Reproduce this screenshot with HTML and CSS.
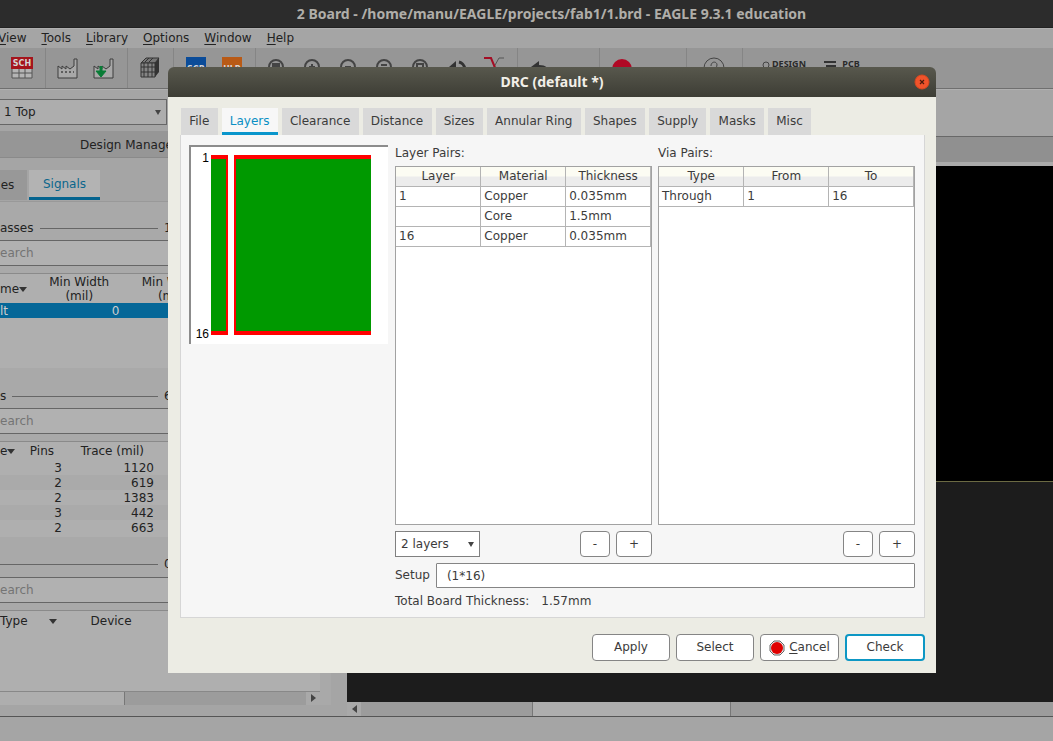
FILE: index.html
```
<!DOCTYPE html>
<html lang="en">
<head>
<meta charset="utf-8">
<title>DRC (default *)</title>
<link rel="stylesheet" href="styles.css">
</head>
<body>
<div class="app">
  <header class="titlebar">2 Board - /home/manu/EAGLE/projects/fab1/1.brd - EAGLE 9.3.1 education</header>
  <nav class="menu">
    <a href="#"><u>V</u>iew</a><a href="#"><u>T</u>ools</a><a href="#"><u>L</u>ibrary</a><a href="#"><u>O</u>ptions</a><a href="#"><u>W</u>indow</a><a href="#"><u>H</u>elp</a>
  </nav>
  <div class="toolbar">
    <button class="tool" aria-label="Schematic"><svg viewBox="0 0 22 22"><path d="M1 1h20v20H1z" fill="#b5b5b5" stroke="#555"/><path d="M1 16h20M8 12v9M14 12v9" stroke="#555"/><path d="M0 0h22v12H0z" fill="#a5141c"/><text x="11" y="9" class="icon-text">SCH</text></svg></button>
    <i class="sep"></i>
    <button class="tool" aria-label="Manufacturing"><svg viewBox="0 0 22 22"><path d="M1 21V9l4 3V9l4 3V9l4 3 4-3V2h3v19z" fill="#a8a8a8" stroke="#3c3c3c"/><path d="M4 15h13" stroke="#444" stroke-width="1.5" stroke-dasharray="2 2"/></svg></button>
    <button class="tool" aria-label="Manufacturing sync"><svg viewBox="0 0 22 22"><path d="M1 21V9l4 3V9l4 3V9l4 3 4-3V2h3v19z" fill="#a8a8a8" stroke="#3c3c3c"/><path d="M8 9v5" stroke="#087c36" stroke-width="3"/><path d="M3 14h10l-5 6z" fill="#087c36" stroke="#087c36" stroke-linejoin="round"/></svg></button>
    <i class="sep"></i>
    <button class="tool" aria-label="Package"><svg viewBox="0 0 22 22"><path d="M2 6l5-5h13l-4 5z" fill="#777" stroke="#333"/><path d="M2 6h14v14H2z" fill="#858585" stroke="#333"/><path d="M16 6l4-5v14l-4 5z" fill="#333"/><path d="M5 6v14M9 6v14M13 6v14M2 10h14M2 15h14M6 5l4-4M10 5l4-4" stroke="#333"/></svg></button>
    <i class="sep"></i>
    <button class="tool" aria-label="Script"><svg viewBox="0 0 22 22"><path d="M1 0h20v20H1z" fill="#0b4c99"/><text x="11" y="15" class="icon-text">SCR</text></svg></button>
    <button class="tool" aria-label="User program"><svg viewBox="0 0 22 22"><path d="M1 0h20v20H1z" fill="#b95a16"/><text x="11" y="15" class="icon-text">ULP</text></svg></button>
    <i class="sep"></i>
    <button class="tool" aria-label="Zoom to fit"><svg viewBox="0 0 22 22" class="line"><circle cx="9" cy="10" r="7"/><path d="M6 7h6v6H6z" fill="#444"/></svg></button>
    <button class="tool" aria-label="Zoom in"><svg viewBox="0 0 22 22" class="line"><circle cx="9" cy="10" r="7"/><path d="M9 7v6M6 10h6"/></svg></button>
    <button class="tool" aria-label="Zoom out"><svg viewBox="0 0 22 22" class="line"><circle cx="9" cy="10" r="7"/><path d="M6 10h6"/></svg></button>
    <button class="tool" aria-label="Zoom select"><svg viewBox="0 0 22 22" class="line"><circle cx="9" cy="10" r="7"/><path d="M6 8h6"/></svg></button>
    <button class="tool" aria-label="Redraw"><svg viewBox="0 0 22 22" class="line"><circle cx="9" cy="10" r="7"/><path d="M6 12V7h6v5"/></svg></button>
    <button class="tool" aria-label="Refresh"><svg viewBox="0 0 22 22"><path d="M2 10l7-6v6z" fill="#333"/><path d="M12 5c4 1 5 3 6 7" fill="none" stroke="#333" stroke-width="3"/></svg></button>
    <button class="tool" aria-label="Route"><svg viewBox="0 0 22 22" fill="none"><path d="M21 1h-5l-5 9v11" stroke="#555"/><path d="M1 1h7l5 12" stroke="#a30d24" stroke-width="2"/></svg></button>
    <i class="sep"></i>
    <button class="tool" aria-label="Undo"><svg viewBox="0 0 22 22"><path d="M2 10l8-6v4c7 0 10 3 10 9-3-3-5-4-10-4v4z" fill="#333"/></svg></button>
    <button class="tool" aria-label="Redo"><svg viewBox="0 0 22 22"><path d="M20 16l-7-5v10z" fill="#777"/></svg></button>
    <i class="sep"></i>
    <button class="tool" aria-label="Stop"><svg viewBox="0 0 22 22"><circle cx="11" cy="12" r="10" fill="#b10925"/></svg></button>
    <button class="tool" aria-label="Go"><svg viewBox="0 0 22 22"><circle cx="11" cy="16" r="5" fill="#8a8a8a"/></svg></button>
    <i class="sep wide"></i>
    <button class="tool" aria-label="Help"><svg viewBox="0 0 22 22" class="line thin"><circle cx="11" cy="11" r="10"/><path d="M8 9c0-5 6-5 6-1 0 3-3 3-3 6"/></svg></button>
    <i class="sep wide"></i>
    <button class="tool brand"><svg viewBox="0 0 8 8" class="line thin mark"><circle cx="4" cy="5" r="3"/></svg>DESIGN</button>
    <button class="tool brand"><svg viewBox="0 0 12 8" class="mark pcb"><path d="M0 2h12M2 6h10" stroke="#333" stroke-width="2"/></svg>PCB</button>
  </div>
  <div class="layerbar"><span class="pick"><select aria-label="Layer"><option>1 Top</option></select></span></div>
  <main class="work">
    <aside class="dock">
      <h2 class="dock-title">Design Manager</h2>
      <div class="dock-tabs"><button class="dtab first">es</button><button class="dtab on">Signals</button></div>
      <div class="sections">
        <section class="section">
          <div class="legend"><span>asses</span><hr><span class="count">1</span></div>
          <input class="search" placeholder="earch" aria-label="Search classes">
          <div class="list">
            <table class="classes">
              <tr><th class="n">me<b class="down"></b></th><th>Min Width<br>(mil)</th><th>Min Width<br>(mil)</th></tr>
              <tr class="sel"><td class="l">lt</td><td>0</td><td>0</td></tr>
            </table>
          </div>
        </section>
        <section class="section">
          <div class="legend"><span>s</span><hr><span class="count">6</span></div>
          <input class="search" placeholder="earch" aria-label="Search signals">
          <div class="list">
            <table class="signals">
              <tr><th class="l">e<b class="down"></b></th><th>Pins</th><th>Trace (mil)</th><th></th></tr>
              <tr><td></td><td>3</td><td>1120</td><td></td></tr>
              <tr><td></td><td>2</td><td>619</td><td></td></tr>
              <tr><td></td><td>2</td><td>1383</td><td></td></tr>
              <tr><td></td><td>3</td><td>442</td><td></td></tr>
              <tr><td></td><td>2</td><td>663</td><td></td></tr>
            </table>
          </div>
        </section>
        <section class="section">
          <div class="legend"><hr><span class="count">0</span></div>
          <input class="search" placeholder="earch" aria-label="Search items">
          <div class="list">
            <div class="items"><span>Type</span><b class="down"></b><span class="device">Device</span></div>
            <div class="hbar"><i class="thumb"></i><i class="track"></i><i class="end"><b class="right"></b></i></div>
          </div>
        </section>
      </div>
    </aside>
    <section class="board">
      <div class="command"></div>
      <div class="canvas"><div class="outline"></div></div>
      <div class="hbar big"><i class="end"><b class="left"></b></i><i class="track before"></i><i class="thumb"></i><i class="track"></i></div>
    </section>
  </main>
  <footer class="status"></footer>
</div>

<div class="dialog" role="dialog" aria-labelledby="drc-title">
  <header class="dialog-title"><h1 id="drc-title">DRC (default *)</h1>
    <button class="close" aria-label="Close"><svg viewBox="0 0 16 16"><circle cx="8" cy="8" r="7" fill="#f0532b" stroke="#d9481f"/><path d="M6 6l4 4M10 6l-4 4" stroke="#4a1a0c" stroke-width="1.2"/></svg></button>
  </header>
  <div class="dialog-body">
    <div class="tabs" role="tablist">
      <button role="tab" class="tab">File</button><button role="tab" class="tab active" aria-selected="true">Layers</button><button role="tab" class="tab">Clearance</button><button role="tab" class="tab">Distance</button><button role="tab" class="tab">Sizes</button><button role="tab" class="tab">Annular Ring</button><button role="tab" class="tab">Shapes</button><button role="tab" class="tab">Supply</button><button role="tab" class="tab">Masks</button><button role="tab" class="tab">Misc</button>
    </div>
    <div class="pane">
      <div class="preview">
        <svg viewBox="0 0 197 197">
          <path d="M20 8h17v180H20zM43 8h137v180H43z" fill="#009900"/>
          <path d="M20 8h17v180H20v-4h15V12H20zM180 8H43v180h137v-4H45V12h135z" fill="#ff0000"/>
          <text x="18" y="15">1</text><text x="18" y="191">16</text>
        </svg>
      </div>
      <div class="settings">
        <div class="pairs">
          <section class="pair">
            <h3>Layer Pairs:</h3>
            <div class="grid"><table>
              <tr><th>Layer</th><th>Material</th><th>Thickness</th></tr>
              <tr><td>1</td><td>Copper</td><td>0.035mm</td></tr>
              <tr><td></td><td>Core</td><td>1.5mm</td></tr>
              <tr><td>16</td><td>Copper</td><td>0.035mm</td></tr>
            </table></div>
            <div class="row"><span class="pick small"><select aria-label="Layer count"><option>2 layers</option></select></span><button class="btn minus">-</button><button class="btn plus">+</button></div>
          </section>
          <section class="pair">
            <h3>Via Pairs:</h3>
            <div class="grid"><table>
              <tr><th>Type</th><th>From</th><th>To</th></tr>
              <tr><td>Through</td><td>1</td><td>16</td></tr>
            </table></div>
            <div class="row"><button class="btn minus">-</button><button class="btn plus">+</button></div>
          </section>
        </div>
        <div class="setup"><label for="setup">Setup</label><input id="setup" value="(1*16)"></div>
        <div class="total"><span>Total Board Thickness:</span><span>1.57mm</span></div>
      </div>
    </div>
    <div class="actions">
      <button class="btn act">Apply</button><button class="btn act">Select</button><button class="btn act cancel"><svg viewBox="0 0 16 16"><path d="M5 1h6l4 4v6l-4 4H5l-4-4V5z" fill="#e8e8e8" stroke="#666"/><circle cx="8" cy="8" r="6" fill="#e00000"/></svg><span><u>C</u>ancel</span></button><button class="btn act check">Check</button>
    </div>
  </div>
</div>
</body>
</html>
```
FILE: styles.css
```
* { box-sizing: border-box; }
body, button, input, select { font: 12px/15px "DejaVu Sans", sans-serif; color: #3b3b3b; }
body { margin: 0; overflow: hidden; }
button { padding: 0; border: 0; background: none; }
h1, h2, h3 { margin: 0; font-weight: normal; font-size: 12px; }
table { border-collapse: collapse; }
th { font-weight: normal; }
u { text-underline-offset: 2px; }

.app { display: flex; flex-direction: column; height: 100vh; background: #a5a5a5; color: #222; }
.titlebar { height: 28px; padding-left: 50px; background: #2c2c2c; color: #b0aea9; text-align: center; font: bold 14px/28px "Noto Sans", sans-serif; white-space: nowrap; border-bottom: 1px solid #222; }
.menu { display: flex; gap: 15px; height: 20px; line-height: 18px; border-top: 1px solid #b0b0b0; }
.menu a { color: #222; text-decoration: none; }
.menu a:first-child { margin-left: -2px; }
.toolbar { display: flex; align-items: center; height: 41px; padding-left: 4px; background: #969696; border-bottom: 1px solid #6f6f6f; }
.tool { display: flex; align-items: center; justify-content: center; width: 36px; height: 40px; flex: none; }
.tool svg { width: 22px; height: 22px; }
.tool svg.line { fill: none; stroke: #444; stroke-width: 2; }
.tool svg.thin { stroke-width: 1; }
.icon-text { font: bold 8px "DejaVu Sans", sans-serif; fill: #d5d5d5; text-anchor: middle; }
.sep { width: 10px; height: 40px; flex: none; background: linear-gradient(#858585, #858585) center / 1px 100% no-repeat; }
.sep.wide { width: 20px; }
.tool.brand { width: 64px; gap: 2px; padding-bottom: 8px; font: bold 9px/10px "Noto Sans", sans-serif; color: #2a2a2a; }
.tool.brand .mark { width: 8px; height: 8px; }
.tool.brand .pcb { width: 12px; margin-right: 4px; }
.brand + .brand { width: 52px; }
.layerbar { height: 42px; padding-top: 9px; border-top: 1px solid #b0b0b0; }
.layerbar .pick { width: 167px; height: 26px; }
.layerbar select { background: #adadad; border: 1px solid #666; border-left: 0; padding-left: 4px; color: #222; }

.pick { position: relative; display: block; }
.pick select { appearance: none; width: 100%; height: 100%; border-radius: 0; }
.pick::after { content: ""; position: absolute; right: 6px; top: 50%; margin-top: -2px; border: 3px solid transparent; border-top: 5px solid #444; border-bottom: 0; }

.work { display: flex; flex: 1; min-height: 0; }
.dock { display: flex; flex-direction: column; width: 331px; padding-bottom: 11px; }
.dock-title { height: 27px; padding-left: 80px; line-height: 28px; background: #969696; border-bottom: 1px solid #8a8a8a; }
.dock-tabs { display: flex; gap: 2px; height: 44px; padding-top: 12px; border-bottom: 1px solid #999; }
.dtab { height: 30px; width: 71px; background: #b3b3b3; color: #222; }
.dtab.first { width: 27px; padding-right: 12px; background: #989898; }
.dtab.on { color: #0a668c; border-bottom: 3px solid #05648f; padding-top: 2px; }
.sections { display: flex; flex: 1; flex-direction: column; gap: 16px; padding: 14px 11px 0 0; background: #a9a9a9; min-height: 0; }
.section { display: flex; flex: 1; flex-direction: column; min-height: 0; }
.legend { display: flex; gap: 6px; height: 24px; align-items: center; flex: none; width: 173px; }
.legend hr { flex: 1; margin: 0; border: 0; border-top: 1px solid #666; }
.count { width: 9px; }
.search { width: 100%; height: 26px; margin-bottom: 7px; padding: 0; border: solid #666; border-width: 1px 0; background: #b1b1b1; flex: none; }
.search::placeholder { color: #747474; opacity: 1; }
.list { display: flex; flex: 1; flex-direction: column; overflow: hidden; background: #afafaf; border-top: 1px solid #8a8a8a; }
.list td, .list th { padding: 0; height: 15px; text-align: right; line-height: 14px; color: #222; }
.classes { table-layout: fixed; width: 218px; }
.list .classes th { height: 29px; text-align: center; }
.list .l, .list .classes .n { text-align: left; }
.classes th:first-child { width: 33px; }
.list .classes td { padding-right: 6px; }
.list .classes .sel td { background: #056798; color: #ccc; }
.list .classes .sel .l { padding: 0; }
.down, .left, .right { display: inline-block; border: 4px solid transparent; }
.down { border-top: 5px solid #333; border-bottom: 0; vertical-align: 1px; }
.left { border-right: 5px solid #444; border-left: 0; }
.right { border-left: 5px solid #444; border-right: 0; }
.signals { table-layout: fixed; width: 320px; }
.list .signals th { height: 18px; line-height: 18px; white-space: nowrap; }
.signals th:first-child { width: 16px; }
.signals th:nth-child(2) { width: 46px; }
.signals th:nth-child(3) { width: 92px; }
.list .signals th:nth-child(2) { padding-right: 8px; }
.list .signals th:nth-child(3) { padding-right: 10px; }
.signals tr:nth-child(odd) td { background: #aaa; }
.items { display: flex; flex: 1; padding-top: 3px; }
.items .down { margin: 5px 34px 0 21px; height: 5px; }
.hbar { display: flex; height: 14px; flex: none; background: #9c9c9c; border-top: 1px solid #888; }
.thumb { width: 125px; background: #aeaeae; border-right: 1px solid #777; }
.track { flex: 1; }
.end { display: grid; place-items: center; width: 14px; background: #a9a9a9; }
.board { display: flex; flex: 1; flex-direction: column; padding: 5px 0 0 16px; }
.command { height: 30px; margin-left: -16px; background: linear-gradient(#909090, #909090) 0 0 / 100% 25px no-repeat; border-top: 1px solid #686868; border-bottom: 4px solid #aaa; }
.canvas { flex: 1; background: #1c1c1c; }
.outline { height: 59%; background: #000; border-bottom: 1px solid #6b6a43; }
.hbar.big { border-top: 0; }
.big .thumb { width: 199px; border-left: 1px solid #777; }
.big .track.before { flex: none; width: 171px; }
.status { height: 25px; border-top: 1px solid #555; }

.dialog { position: absolute; left: 168px; right: 117px; top: 67px; }
.dialog-title { display: grid; grid-template-columns: 1fr auto; align-items: center; height: 30px; padding: 0 6px; border-radius: 6px 6px 0 0; background: linear-gradient(#58584d, #3d3d35); }
.dialog-title h1 { padding-left: 16px; text-align: center; color: #f2efe8; font: bold 14px/30px "Noto Sans", sans-serif; }
.close, .close svg { display: block; width: 16px; height: 16px; }
.dialog-body { padding: 11px 11px 12px 12px; background: #ecece4; }
.tabs { display: flex; gap: 4px; padding-left: 1px; max-width: 631px; }
.tab { flex: 1 1 auto; height: 27px; padding: 0 8px; background: #d9d9d9; color: #3b3b3b; white-space: nowrap; }
.tab.active { background: #f7f7f7; color: #0a8fc4; border-bottom: 3px solid #0a96cc; padding-top: 2px; }
.pane { display: flex; gap: 7px; padding: 10px 9px 8px; background: #f6f6f6; border: solid #d6d6d6; border-width: 0 1px 1px; }
.preview { width: 199px; height: 199px; border: solid #8c8c8c; border-width: 2px 0 0 2px; background: #fff; flex: none; }
.pane .preview { margin-left: -1px; }
.preview svg { display: block; width: 197px; height: 197px; }
.preview text { font: 12px "Liberation Sans", sans-serif; text-anchor: end; fill: #000; }
.settings { flex: 1; display: flex; flex-direction: column; gap: 6px; }
.pairs { display: grid; grid-template-columns: 1fr 1fr; gap: 6px; }
.pair h3 { height: 21px; line-height: 16px; }
.grid { height: 359px; margin-bottom: 6px; background: #fff; border: 1px solid #a2a2a2; }
.grid table { width: 100%; table-layout: fixed; }
.grid th, .grid td { height: 20px; padding: 0 3px; line-height: 18px; border: 1px solid #b4b4b4; }
.grid th { height: 19px; border-top: 0; background: linear-gradient(#fcfcf3 45%, #ececec 55%); }
.grid td { text-align: left; }
.grid tr > :first-child { border-left: 0; }
.row { display: flex; gap: 6px; height: 26px; }
.pick.small { width: 85px; }
.small select { background: #fff; border: 1px solid #808080; padding-left: 5px; }
.btn { height: 27px; background: #fff; border: 1px solid #858585; border-radius: 4px; color: #3b3b3b; }
.row .btn { height: 26px; }
.minus { width: 30px; margin-left: auto; }
.plus { width: 36px; }
.setup { display: flex; align-items: center; gap: 6px; }
.setup input { flex: 1; height: 25px; padding: 0 10px; background: #fff; border: 1px solid #858585; border-radius: 1px; }
.total { display: flex; gap: 12px; }
.actions { display: flex; justify-content: flex-end; gap: 6px; padding-top: 16px; }
.act { width: 78px; }
.act.cancel { display: flex; align-items: center; justify-content: center; gap: 4px; width: 79px; }
.cancel svg { width: 16px; height: 16px; }
.act.check { width: 80px; border: 2px solid #0d97c4; }
```
